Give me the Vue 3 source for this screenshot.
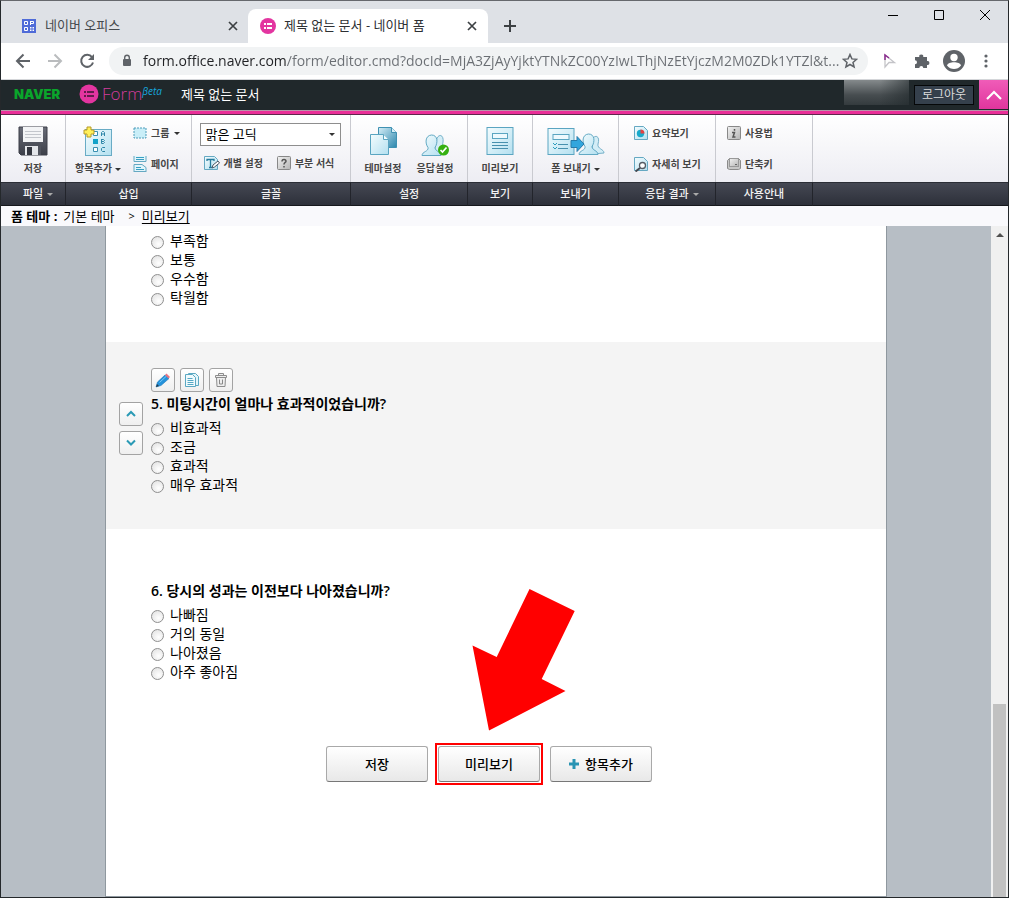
<script setup>
import { ref } from 'vue'

const address = ref('form.office.naver.com/form/editor.cmd?docId=MjA3ZjAyYjktYTNkZC00YzIwLThjNzEtYjczM2M0ZDk1YTZl&t...')
const font = ref('맑은 고딕')

const questions = [
  { id: 4, title: '', options: ['부족함', '보통', '우수함', '탁월함'] },
  { id: 5, title: '5. 미팅시간이 얼마나 효과적이었습니까?', active: true, options: ['비효과적', '조금', '효과적', '매우 효과적'] },
  { id: 6, title: '6. 당시의 성과는 이전보다 나아졌습니까?', options: ['나빠짐', '거의 동일', '나아졌음', '아주 좋아짐'] }
]
</script>

<template>
  <div class="window">
    <svg class="defs" width="0" height="0" aria-hidden="true">
      <defs>
        <linearGradient id="ice" x1="0" y1="0" x2="1" y2="1">
          <stop offset="0" stop-color="#f4fcfe" />
          <stop offset="1" stop-color="#b4e0f0" />
        </linearGradient>
        <linearGradient id="sea" x1="0" y1="0" x2="1" y2="1">
          <stop offset="0" stop-color="#d5eef7" />
          <stop offset="1" stop-color="#2b86ad" />
        </linearGradient>
        <linearGradient id="steel" x1="0" y1="0" x2="0" y2="1">
          <stop offset="0" stop-color="#6a6d78" />
          <stop offset="1" stop-color="#3c3f49" />
        </linearGradient>
        <linearGradient id="key" x1="0" y1="0" x2="1" y2="1">
          <stop offset="0" stop-color="#f2f2f2" />
          <stop offset="1" stop-color="#b4b4b4" />
        </linearGradient>
      </defs>
    </svg>

    <div class="tabs">
      <div class="tab">
        <svg class="fav" width="16" height="16" viewBox="0 0 16 16">
          <rect x="1" y="1" width="14" height="14" fill="#4f6bd8" />
          <path d="M3.5 3.5h3v3h-3zM3.5 9.5h3v3h-3zM9.5 3v4M9.5 3.5h3v2h-3" fill="none" stroke="#fff" />
          <path d="M9 9h1.500v1.500H9zM11.500 9H13v1.500h-1.500zM9 11.500h1.500V13H9zM11.500 11.500H13V13h-1.500z" fill="#fff" />
        </svg>
        <span class="tab-title">네이버 오피스</span>
        <button class="plain" aria-label="탭 닫기"><svg width="10" height="10" viewBox="0 0 10 10"><path d="M1 1l8 8M9 1L1 9" stroke="#3c4043" stroke-width="1.700" /></svg></button>
      </div>
      <div class="tab current">
        <svg class="fav" width="16" height="16" viewBox="0 0 16 16">
          <circle cx="8" cy="8" r="8" fill="#e335a0" />
          <path d="M4 6h2M7 6h5M4 10h2M7 10h5" stroke="#fff" stroke-width="1.800" />
        </svg>
        <span class="tab-title">제목 없는 문서 - 네이버 폼</span>
        <button class="plain" aria-label="탭 닫기"><svg width="10" height="10" viewBox="0 0 10 10"><path d="M1 1l8 8M9 1L1 9" stroke="#3c4043" stroke-width="1.700" /></svg></button>
      </div>
      <button class="plain new-tab" aria-label="새 탭"><svg width="12" height="12" viewBox="0 0 12 12"><path d="M6 0v12M0 6h12" stroke="#3c4043" stroke-width="2" /></svg></button>
      <div class="win-controls">
        <button class="plain" aria-label="최소화"><svg width="12" height="12" viewBox="0 0 12 12"><path d="M1 6.500h10" stroke="#000" /></svg></button>
        <button class="plain" aria-label="최대화"><svg width="12" height="12" viewBox="0 0 12 12"><path d="M1.500 1.500h9v9h-9z" fill="none" stroke="#000" /></svg></button>
        <button class="plain" aria-label="닫기"><svg width="12" height="12" viewBox="0 0 12 12"><path d="M1 1l10 10M11 1L1 11" stroke="#000" /></svg></button>
      </div>
    </div>

    <div class="toolbar">
      <button class="plain nav" aria-label="뒤로"><svg width="16" height="16" viewBox="0 0 16 16"><path d="M15 8H2M8.500 1.500L2 8l6.500 6.500" fill="none" stroke="#5f6368" stroke-width="2" /></svg></button>
      <button class="plain nav" aria-label="앞으로"><svg width="16" height="16" viewBox="0 0 16 16"><path d="M1 8h13M7.500 1.500L14 8l-6.500 6.500" fill="none" stroke="#babcbe" stroke-width="2" /></svg></button>
      <button class="plain nav" aria-label="새로고침"><svg width="16" height="16" viewBox="0 0 16 16"><path d="M13 4.200A6 6 0 1 0 14 9.500" fill="none" stroke="#5f6368" stroke-width="2" /><path d="M15 1v6H9z" fill="#5f6368" /></svg></button>
      <div class="omnibox">
        <svg width="10" height="14" viewBox="0 0 10 14"><rect x="1" y="5" width="8" height="7" rx="1" fill="#5f6368" /><path d="M2.700 5V3.500a2.300 2.300 0 0 1 4.600 0V5" fill="none" stroke="#5f6368" stroke-width="1.400" /></svg>
        <input v-model="address" type="text" aria-label="주소" />
        <button class="plain" aria-label="북마크"><svg width="16" height="16" viewBox="0 0 16 16"><path d="M8 1.500l1.900 4.400 4.700.4-3.600 3.100 1.100 4.600L8 11.500 3.900 14 5 9.400 1.400 6.300l4.700-.4z" fill="none" stroke="#5f6368" stroke-width="1.500" /></svg></button>
      </div>
      <div class="extras">
        <button class="plain" aria-label="포인터"><svg width="16" height="16" viewBox="0 0 16 16"><path d="M3 2l9.500 7.500H7L3 14z" fill="none" stroke="#c4c4c8" stroke-width="1.300" /><path d="M3 7V2l4 3" fill="none" stroke="#8b2b8f" stroke-width="1.500" /></svg></button>
        <button class="plain" aria-label="확장 프로그램"><svg width="16" height="16" viewBox="0 0 16 16"><path d="M1 4h4.300a2 2 0 1 1 3.900 0H13v4a2 2 0 1 1 0 3.900V15H9.300a2 2 0 0 0-4 0H1v-3.700a2 2 0 0 0 0-4z" fill="#5f6368" /></svg></button>
        <button class="plain" aria-label="프로필"><svg width="22" height="22" viewBox="0 0 22 22"><circle cx="11" cy="11" r="11" fill="#5f6368" /><circle cx="11" cy="7.500" r="3.700" fill="#fff" /><path d="M4 15.500c1-4.300 13-4.300 14 0-3.500 4.700-10.500 4.700-14 0z" fill="#fff" /></svg></button>
        <button class="plain" aria-label="메뉴"><svg width="4" height="14" viewBox="0 0 4 14"><circle cx="2" cy="2" r="1.600" fill="#5f6368" /><circle cx="2" cy="7" r="1.600" fill="#5f6368" /><circle cx="2" cy="12" r="1.600" fill="#5f6368" /></svg></button>
      </div>
    </div>

    <header class="app-bar">
      <a href="#" class="naver">NAVER</a>
      <a href="#" class="form-logo">
        <svg width="20" height="20" viewBox="0 0 20 20"><circle cx="10" cy="10" r="9.500" fill="#e335a0" /><path d="M5 8h2M8 8h7M5 12h2M8 12h7" stroke="#3a1530" stroke-width="1.700" /></svg>
        <span>Form</span><em>βeta</em>
      </a>
      <h1>제목 없는 문서</h1>
      <div class="user"></div>
      <button class="logout">로그아웃</button>
      <button class="fold" aria-label="접기"><svg width="16" height="10" viewBox="0 0 16 10"><path d="M1 9l7-7 7 7" fill="none" stroke="#fff" stroke-width="2.200" /></svg></button>
    </header>

    <nav class="ribbon">
      <section class="group g-file">
        <div class="body">
          <button class="big">
            <svg width="30" height="30" viewBox="0 0 30 30">
              <path d="M1 1h28v28H3l-2-2z" fill="url(#steel)" stroke="#3c3f49" />
              <rect x="5" y="1" width="20" height="15" fill="#f3f4f6" />
              <path d="M7 5.500h16M7 8.500h16M7 11.500h16" stroke="#c3c6cc" />
              <rect x="7" y="20" width="16" height="9" fill="#e4e6ea" />
              <rect x="9" y="21" width="5" height="8" fill="#33363f" /><rect x="20" y="20" width="3" height="9" fill="#50535d" />
            </svg>
            <span>저장</span>
          </button>
        </div>
        <button class="caption menu">파일<i class="caret"></i></button>
      </section>

      <section class="group g-insert">
        <div class="body">
          <button class="big">
            <svg width="30" height="30" viewBox="0 0 30 30">
              <rect x="2.500" y="3.500" width="26" height="26" fill="url(#ice)" stroke="#69abc5" />
              <path d="M10.500 5.500h4v4h-4zM10.500 21.500h4v4h-4z" fill="#fff" stroke="#3a8fb0" /><rect x="10" y="13" width="5" height="5" fill="#13a2c9" />
              <path d="M18.500 10V6.500l1-1h1l1 1V10M18.500 8h3M18.500 13v4.500h2l1-1-1-1h-2M18.500 13.500h2l1 1-1 1M22 21.500h-2.500l-1 1v2l1 1H22" fill="none" stroke="#2f86a8" />
              <path d="M4 1h4v3h3v4H8v3H4V8H1V4h3z" fill="#fff05a" stroke="#b79a27" />
            </svg>
            <span>항목추가<i class="caret"></i></span>
          </button>
          <div class="rows">
            <button class="small"><svg width="14" height="14" viewBox="0 0 14 14"><rect x="1" y="2" width="12" height="10" fill="#c9eef8" stroke="#4c9cba" stroke-dasharray="2 1" /></svg><span>그룹</span><i class="caret wide"></i></button>
            <button class="small"><svg width="14" height="16" viewBox="0 0 14 16"><path d="M1 0v5.500h12V0M1 16V8.500h8l4 3V16" fill="#e2f5fb" stroke="#65a8c2" /><path d="M3 1.500h8M3 3.500h8M3 11.500h5M3 13.500h8" stroke="#399fc2" /><path d="M1 15.500h12" stroke="#65a8c2" /></svg><span>페이지</span></button>
          </div>
        </div>
        <div class="caption">삽입</div>
      </section>

      <section class="group g-font">
        <div class="body">
          <div class="font-tools">
            <div class="select-wrap">
              <select v-model="font" aria-label="글꼴"><option>맑은 고딕</option></select>
              <i class="caret"></i>
            </div>
            <div class="pair">
              <button class="small"><svg width="16" height="16" viewBox="0 0 16 16"><path d="M.5 1.500h10l3 3v10H.5z" fill="url(#ice)" stroke="#65a8c2" /><path d="M3 6V4.500h7V6M6.500 4.500v8M5 12.500h3" fill="none" stroke="#277c9e" stroke-width="1.300" /><path d="M8 13l1-3 5-4 1.500 2-5 4z" fill="#fff" stroke="#4c5665" /></svg><span>개별 설정</span></button>
              <button class="small"><svg width="14" height="16" viewBox="0 0 14 16"><rect x=".5" y="1.500" width="13" height="13" rx="1" fill="url(#key)" stroke="#888" /><path d="M5 6.500c0-3 4-2.500 4-.3C9 7.500 7 7.500 7 9.500M7 11v1.500" fill="none" stroke="#555" stroke-width="1.500" /></svg><span>부분 서식</span></button>
            </div>
          </div>
        </div>
        <div class="caption">글꼴</div>
      </section>

      <section class="group g-settings">
        <div class="body">
          <button class="big">
            <svg width="30" height="30" viewBox="0 0 30 30">
              <path d="M10.500 1.500h13l5 5v15h-18z" fill="url(#sea)" stroke="#3f91b2" /><path d="M23.500 1.500v5h5" fill="#d6eff8" stroke="#3f91b2" />
              <path d="M2.500 8.500h13l5 5v15h-18z" fill="url(#ice)" stroke="#5aa5c1" /><path d="M15.500 8.500v5h5" fill="#f4fcfe" stroke="#5aa5c1" />
            </svg>
            <span>테마설정</span>
          </button>
          <button class="big">
            <svg width="30" height="30" viewBox="0 0 30 30">
              <path d="M17 12c3-5 7-2 6 4-1 5-1 7 4 10v2H14z" fill="#d3edf6" stroke="#76b1c9" />
              <path d="M2 29.500c0-4 7-4 6-8-3-4-3-12 3.500-12.500C18 9 18 17 15 21.500c0 4 6 4 6 8z" fill="url(#ice)" stroke="#62a9c4" />
              <circle cx="23.500" cy="24" r="5.500" fill="#36b010" /><path d="M20.500 24l2 2 4-4.500" fill="none" stroke="#fff" stroke-width="1.700" />
            </svg>
            <span>응답설정</span>
          </button>
        </div>
        <div class="caption">설정</div>
      </section>

      <section class="group g-view">
        <div class="body">
          <button class="big">
            <svg width="30" height="30" viewBox="0 0 30 30"><rect x="2" y="1.500" width="26" height="27" fill="url(#ice)" stroke="#5aa5c1" /><rect x="7.500" y="7.500" width="15" height="5" fill="#edf9fd" stroke="#5aa5c1" /><path d="M7 16.500h16M7 19.500h16M7 22.500h16" stroke="#4790ae" /></svg>
            <span>미리보기</span>
          </button>
        </div>
        <div class="caption">보기</div>
      </section>

      <section class="group g-send">
        <div class="body">
          <button class="big">
            <svg width="58" height="30" viewBox="0 0 58 30">
              <rect x="1" y="2.500" width="26" height="26" fill="url(#ice)" stroke="#5aa5c1" /><rect x="6" y="8.500" width="16" height="5" fill="#edf9fd" stroke="#5aa5c1" />
              <path d="M11 18.500h10M11 22.500h10" stroke="#4790ae" /><path d="M6 17l2 2 2-2M6 21l2 2 2-2" fill="none" stroke="#2c9dbd" />
              <path d="M46 12c4-4 7 0 5 6-1 5 6 5 6 9l-12 1z" fill="#d3edf6" stroke="#76b1c9" />
              <path d="M32 28.500c0-4 7-4 6-8-3-4-3-12 3.500-12.500C48 8 48 16 45 20.500c0 4 6 4 6 8z" fill="url(#ice)" stroke="#62a9c4" />
              <path d="M24 14.500h6v-4l7 7.500-7 7.500v-4h-6z" fill="#32a6dd" stroke="#277aa8" />
            </svg>
            <span>폼 보내기<i class="caret"></i></span>
          </button>
        </div>
        <div class="caption">보내기</div>
      </section>

      <section class="group g-result">
        <div class="body">
          <div class="rows">
            <button class="small"><svg width="14" height="16" viewBox="0 0 14 16"><path d="M.5 1.500h9l4 4v9H.5z" fill="url(#ice)" stroke="#65a8c2" /><circle cx="6.500" cy="8.500" r="3.700" fill="#18aacb" /><path d="M6.500 8.500V4.500a4 4 0 0 1 4 4z" fill="#e34243" /></svg><span>요약보기</span></button>
            <button class="small"><svg width="14" height="16" viewBox="0 0 14 16"><path d="M.5 1.500h9l4 4v9H.5z" fill="url(#ice)" stroke="#65a8c2" /><circle cx="8.500" cy="9.500" r="3" fill="#fff" stroke="#555b64" stroke-width="1.300" /><path d="M6 12l-4.500 3.500" stroke="#454a52" stroke-width="2" /></svg><span>자세히 보기</span></button>
          </div>
        </div>
        <button class="caption menu">응답 결과<i class="caret"></i></button>
      </section>

      <section class="group g-help">
        <div class="body">
          <div class="rows">
            <button class="small"><svg width="14" height="16" viewBox="0 0 14 16"><rect x=".5" y="1.500" width="13" height="13" rx="1" fill="url(#key)" stroke="#888" /><path d="M5 7.500h2.500L6 12h2.500M7.500 4v1.700" fill="none" stroke="#555" stroke-width="1.500" /></svg><span>사용법</span></button>
            <button class="small"><svg width="14" height="14" viewBox="0 0 14 14"><path d="M2.500 1.500h9l2 2v8l-2 1h-9l-2-1v-8z" fill="#c7c7c7" stroke="#8b8b8b" /><rect x="2.500" y="1.500" width="9" height="8" fill="url(#key)" stroke="#999" /><path d="M8 7.500h2" stroke="#666" /></svg><span>단축키</span></button>
          </div>
        </div>
        <div class="caption">사용안내</div>
      </section>

      <section class="group rest">
        <div class="body"></div>
        <div class="caption"></div>
      </section>
    </nav>

    <div class="theme-line">
      <strong>폼 테마 :</strong><span>기본 테마</span><span class="sep">&gt;</span><a href="#">미리보기</a>
    </div>

    <div class="workspace">
      <div class="canvas">
        <main class="paper">
          <section v-for="q in questions" :key="q.id" class="question" :class="{ active: q.active, partial: !q.title }">
            <div class="movers">
              <template v-if="q.active">
                <button class="icon-btn" aria-label="위로"><svg width="10" height="8" viewBox="0 0 10 8"><path d="M1 6l4-4 4 4" fill="none" stroke="#2a9ab5" stroke-width="2" /></svg></button>
                <button class="icon-btn" aria-label="아래로"><svg width="10" height="8" viewBox="0 0 10 8"><path d="M1 1.500l4 4 4-4" fill="none" stroke="#2a9ab5" stroke-width="2" /></svg></button>
              </template>
            </div>
            <div class="content">
              <div v-if="q.title" class="tools">
                <template v-if="q.active">
                  <button class="icon-btn" aria-label="수정"><svg width="16" height="16" viewBox="0 0 16 16"><path d="M1 15l1.500-5 7.500-7 4 3.500L6 13.500z" fill="#2492db" stroke="#1d78bb" stroke-width=".6" /><path d="M10 3l1.500-1.500L15 5l-1.500 1.500z" fill="#e57582" /><path d="M1 15l1-3 2 2z" fill="#263b4b" /><path d="M4.500 10.500L11 4.500" stroke="#7cc9f5" /></svg></button>
                  <button class="icon-btn" aria-label="복사"><svg width="16" height="16" viewBox="0 0 16 16"><path d="M4.500 1.500h7l3 3v9h-10z" fill="#e3f5fa" stroke="#5ba8c2" /><path d="M1.500 2.500h7l3 3v9h-10z" fill="#f0fafd" stroke="#5ba8c2" /><path d="M3.500 6.500h5M3.500 8.500h6M3.500 10.500h6M3.500 12.500h6" stroke="#55a8c4" /></svg></button>
                  <button class="icon-btn" aria-label="삭제"><svg width="16" height="16" viewBox="0 0 16 16"><path d="M5.500 3V1.500h5V3M2.500 3.500h11v2h-11zM3.500 5.500h9l-.5 9H4z" fill="#eee" stroke="#8c8c8c" /><path d="M6.500 7.500v4.500h3V7.500" fill="none" stroke="#888" /></svg></button>
                </template>
              </div>
              <h2 v-if="q.title">{{ q.title }}</h2>
              <div class="options" role="radiogroup" :aria-label="q.title || '4'">
                <label v-for="o in q.options" :key="o"><input type="radio" :name="'q' + q.id" :value="o" /><span>{{ o }}</span></label>
              </div>
            </div>
          </section>

          <div class="actions">
            <button class="action">저장</button>
            <div class="target">
              <button class="action">미리보기</button>
              <svg class="arrow" width="104" height="142" viewBox="0 0 104 142"><path d="M57.500 0L102.700 22 69.700 90 93.500 102 17 141.500 .5 56.500 24.700 68z" fill="#f00" /></svg>
            </div>
            <button class="action"><svg width="10" height="10" viewBox="0 0 10 10"><path d="M5 0v10M0 5h10" stroke="#2a94b3" stroke-width="3" /></svg>항목추가</button>
          </div>
        </main>
      </div>
      <div class="scrollbar">
        <div class="up"></div>
        <div class="before"></div>
        <div class="thumb"></div>
      </div>
    </div>
  </div>
</template>

<style>
body {
  margin: 0;
}
</style>

<style scoped>
.window {
  box-sizing: border-box;
  min-height: 100vh;
  display: flex;
  flex-direction: column;
  border: 1px solid #24282b;
  border-top-color: #66686d;
  background: #fff;
  color: #000;
  font: 13px/16px "Open Sans", "Noto Sans CJK KR", sans-serif;
}
.window *,
.window *::before {
  box-sizing: border-box;
}
.defs {
  position: absolute;
}
svg {
  display: block;
  flex: none;
}
button {
  margin: 0;
  padding: 0;
  border: 0;
  background: none;
  color: inherit;
  font: inherit;
  cursor: pointer;
}
.plain {
  display: flex;
  align-items: center;
  justify-content: center;
  flex: none;
}

.tabs {
  display: flex;
  height: 42px;
  padding-top: 8px;
  background: #dee1e6;
}
.tab {
  display: flex;
  align-items: center;
  gap: 8px;
  width: 240px;
  margin-left: 8px;
  padding: 0 11px 0 12px;
  color: #45494d;
}
.tab.current {
  margin-left: -1px;
  border-radius: 8px 8px 0 0;
  background: #fff;
  color: #2d3033;
}
.tab-title {
  flex: 1;
  padding-bottom: 3px;
  white-space: nowrap;
}
.new-tab {
  width: 44px;
}
.win-controls {
  display: flex;
  gap: 34px;
  height: 12px;
  margin-left: auto;
  padding-right: 17px;
}

.toolbar {
  display: flex;
  align-items: center;
  height: 37px;
  padding: 0 20px 0 14px;
  border-bottom: 1px solid #d4d6d9;
}
.nav {
  width: 16px;
  margin-right: 16px;
}
.omnibox {
  display: flex;
  flex: 1;
  align-items: center;
  height: 28px;
  margin: 0 14px 0 -2px;
  padding: 0 10px 0 13px;
  border-radius: 14px;
  background: #f1f3f4;
}
.omnibox input {
  flex: 1;
  min-width: 0;
  height: 24px;
  margin: 0 2px 0 11px;
  padding: 0;
  border: 0;
  outline: 0;
  background: linear-gradient(to right, #202124 144px, #6a6e73 144px);
  background-clip: text;
  color: transparent;
  font: 14px/24px "Open Sans", sans-serif;
}
.extras {
  display: flex;
  align-items: center;
  gap: 16px;
}
.extras button:nth-child(3) {
  margin-left: -3px;
}
.extras button:nth-child(4) {
  margin-left: 3px;
}

.app-bar {
  display: flex;
  align-items: flex-start;
  height: 35px;
  padding-left: 13px;
  border-bottom: 1px solid #62254c;
  background: linear-gradient(#20282b 30px, #b597a9 30px, #b597a9 31px, #ea2f98 31px);
}
.naver {
  width: 65px;
  color: #0aa52b;
  font: 900 13px/28px Inter, sans-serif;
  text-decoration: none;
}
.form-logo {
  display: flex;
  align-items: center;
  width: 102px;
  height: 28px;
  color: #d23c9b;
  text-decoration: none;
}
.form-logo span {
  margin-left: 3px;
  font: 300 17px/28px "Open Sans", sans-serif;
}
.form-logo em {
  margin: 0 0 6px;
  color: #17a7dc;
  font: italic 10px/12px "Open Sans", sans-serif;
}
h1 {
  margin: 0;
  color: #fff;
  font: inherit;
  line-height: 28px;
}
.user {
  width: 65px;
  height: 25px;
  margin-left: auto;
  background: linear-gradient(to right, #20282b00 55%, #20282b99), linear-gradient(#858a8c, #474d50 60%, #343b3e);
}
.logout {
  width: 60px;
  height: 20px;
  margin: 5px 5px 0;
  border: 1px solid #050708;
  background: #35404c;
  color: #dcdcdc;
  font-size: 12px;
  line-height: 16px;
}
.fold {
  display: flex;
  align-items: center;
  justify-content: center;
  width: 29px;
  height: 29px;
  background: linear-gradient(#f05cb8, #e0359d);
}

.ribbon {
  display: flex;
  height: 91px;
  color: #444;
}
.group {
  display: flex;
  flex-direction: column;
  flex: none;
}
.g-file { width: 65px; }
.g-insert { width: 126px; }
.g-font { width: 159px; }
.g-settings { width: 117px; }
.g-view { width: 65px; }
.g-send { width: 86px; }
.g-result { width: 97px; }
.g-help { width: 97px; }
.rest {
  flex: 1;
}
.body {
  display: flex;
  justify-content: center;
  height: 67px;
  border-right: 1px solid #c9cad0;
  background: linear-gradient(#fff, #ededf3);
}
.caption {
  display: flex;
  align-items: center;
  justify-content: center;
  width: 100%;
  height: 24px;
  border-top: 1px solid #2b2e36;
  border-right: 1px solid #22242b;
  border-bottom: 1px solid #16181d;
  background: linear-gradient(#454853, #2d303a);
  color: #f4f4f4;
  font-size: 11px;
  font-weight: 500;
}
.caption.menu {
  padding-left: 10px;
}
.rest .body,
.rest .caption {
  border-right: 0;
}
.caret {
  display: inline-block;
  flex: none;
  margin-left: 3px;
  border: 3px solid transparent;
  border-top-color: #333;
  border-bottom: 0;
  vertical-align: middle;
}
.caret.wide {
  margin-left: 1px;
}
.caption .caret {
  margin-left: 4px;
  border-top-color: #aaa;
}
.big {
  display: flex;
  flex-direction: column;
  align-items: center;
  gap: 5px;
  width: 52px;
  height: 60px;
  padding-top: 11px;
  font-size: 10px;
  font-weight: 600;
  line-height: 14px;
  white-space: nowrap;
}
.rows {
  display: flex;
  flex-direction: column;
  gap: 15px;
  padding-top: 10px;
}
.small {
  display: flex;
  align-items: center;
  gap: 4px;
  height: 16px;
  font-size: 10px;
  font-weight: 600;
  white-space: nowrap;
}
.g-insert .body,
.g-result .body,
.g-help .body {
  justify-content: flex-start;
}
.g-insert .body {
  gap: 9px;
  padding-left: 6px;
}
.g-result .body {
  padding-left: 15px;
}
.g-help .body {
  padding-left: 11px;
}
.g-font .body {
  padding-right: 2px;
}
.font-tools {
  width: 141px;
  padding-top: 8px;
}
.select-wrap {
  position: relative;
  height: 23px;
}
.select-wrap select {
  width: 100%;
  height: 100%;
  padding: 0 5px 2px;
  appearance: none;
  border: 1px solid #8e8e8e;
  border-radius: 0;
  background: #fff;
  color: #000;
  font: inherit;
}
.select-wrap .caret {
  position: absolute;
  top: 10px;
  right: 6px;
  pointer-events: none;
}
.pair {
  display: flex;
  gap: 14px;
  padding: 9px 0 0 4px;
}

.theme-line {
  display: flex;
  align-items: center;
  height: 20px;
  padding-left: 10px;
  background: #f9f9fc;
}
.theme-line span {
  margin-left: 6px;
}
.theme-line .sep {
  margin-left: 14px;
  font-size: 11px;
}
.theme-line a {
  margin-left: 7px;
  color: #000;
  text-underline-offset: 2px;
}

.workspace {
  display: flex;
  flex: 1;
}
.canvas {
  display: flex;
  justify-content: center;
  flex: 1;
  background: #b7bec5;
}
.paper {
  width: 100%;
  max-width: 782px;
  border: solid #8f989f;
  border-width: 0 1px 1px;
  background: #fff;
}
.question {
  display: flex;
  gap: 8px;
  padding: 26px 13px 35px;
}
.question.partial {
  padding-top: 5px;
}
.question.active {
  background: #f4f4f4;
}
.movers {
  display: flex;
  flex: none;
  flex-direction: column;
  gap: 5px;
  width: 24px;
  padding-top: 34px;
}
.partial .movers {
  padding-top: 0;
}
.tools {
  display: flex;
  gap: 5px;
  height: 24px;
}
.icon-btn {
  display: flex;
  align-items: center;
  justify-content: center;
  width: 24px;
  height: 24px;
  border: 1px solid #a3a3a3;
  border-radius: 3px;
  background: linear-gradient(#fff, #efefef);
}
h2 {
  margin: 0 0 2px;
  font-size: 14px;
  font-weight: 600;
  line-height: 24px;
}
.options label {
  display: flex;
  align-items: center;
  gap: 6px;
  height: 19px;
  font-size: 14px;
  line-height: 19px;
}
.options input {
  width: 13px;
  height: 13px;
  margin: 3px 0 0;
  appearance: none;
  border: 1px solid #8f8f8f;
  border-radius: 50%;
  background: radial-gradient(circle at 60% 65%, #fff, #dedede);
}
.actions {
  display: flex;
  justify-content: center;
  gap: 10px;
  padding: 30px 14px 30px 0;
}
.target {
  position: relative;
  outline: 2px solid #f00;
  outline-offset: 1px;
}
.arrow {
  position: absolute;
  bottom: 51px;
  left: 34px;
}
.action {
  display: flex;
  align-items: center;
  justify-content: center;
  gap: 6px;
  width: 102px;
  height: 36px;
  border: 1px solid #a9a9a9;
  border-bottom-color: #777;
  border-radius: 3px;
  background: linear-gradient(#fff, #e8e8e8);
  font-weight: 500;
}
.scrollbar {
  display: flex;
  flex-direction: column;
  width: 17px;
  padding: 0 2px;
  background: #f0f0f0;
}
.up {
  display: flex;
  align-items: center;
  justify-content: center;
  height: 17px;
}
.up::before {
  content: "";
  border: 4px solid transparent;
  border-top: 0;
  border-bottom-color: #505050;
}
.before {
  flex: 461;
}
.thumb {
  flex: 193;
  background: #c1c1c1;
}
</style>
